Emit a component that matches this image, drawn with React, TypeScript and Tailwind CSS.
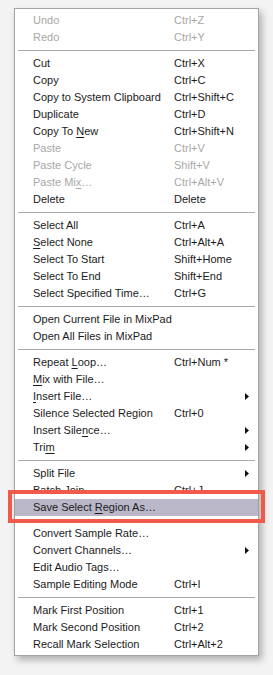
import React from "react";

type Item = {
  label: React.ReactNode;
  shortcut?: string;
  disabled?: boolean;
  submenu?: boolean;
  highlighted?: boolean;
};

// underline the mnemonic letter
const U = ({ children }: { children: React.ReactNode }) => (
  <span className="underline underline-offset-[2px]">{children}</span>
);

const groups: Item[][] = [
  [
    { label: "Undo", shortcut: "Ctrl+Z", disabled: true },
    { label: "Redo", shortcut: "Ctrl+Y", disabled: true },
  ],
  [
    { label: "Cut", shortcut: "Ctrl+X" },
    { label: "Copy", shortcut: "Ctrl+C" },
    { label: "Copy to System Clipboard", shortcut: "Ctrl+Shift+C" },
    { label: "Duplicate", shortcut: "Ctrl+D" },
    { label: <>Copy To <U>N</U>ew</>, shortcut: "Ctrl+Shift+N" },
    { label: "Paste", shortcut: "Ctrl+V", disabled: true },
    { label: "Paste Cycle", shortcut: "Shift+V", disabled: true },
    { label: <>Paste Mi<U>x</U>…</>, shortcut: "Ctrl+Alt+V", disabled: true },
    { label: "Delete", shortcut: "Delete" },
  ],
  [
    { label: "Select All", shortcut: "Ctrl+A" },
    { label: <><U>S</U>elect None</>, shortcut: "Ctrl+Alt+A" },
    { label: "Select To Start", shortcut: "Shift+Home" },
    { label: "Select To End", shortcut: "Shift+End" },
    { label: "Select Specified Time…", shortcut: "Ctrl+G" },
  ],
  [
    { label: "Open Current File in MixPad" },
    { label: "Open All Files in MixPad" },
  ],
  [
    { label: <>Repeat <U>L</U>oop…</>, shortcut: "Ctrl+Num *" },
    { label: <><U>M</U>ix with File…</> },
    { label: <><U>I</U>nsert File…</>, submenu: true },
    { label: "Silence Selected Region", shortcut: "Ctrl+0" },
    { label: <>Insert Sile<U>n</U>ce…</>, submenu: true },
    { label: <>Tri<U>m</U></>, submenu: true },
  ],
  [
    { label: "Split File", submenu: true },
    { label: "Batch Join", shortcut: "Ctrl+J" },
    { label: <>Save Select <U>R</U>egion As…</>, highlighted: true },
    { label: "Convert Sample Rate…" },
    { label: "Convert Channels…", submenu: true },
    { label: "Edit Audio Tags…" },
    { label: "Sample Editing Mode", shortcut: "Ctrl+I" },
  ],
  [
    { label: "Mark First Position", shortcut: "Ctrl+1" },
    { label: "Mark Second Position", shortcut: "Ctrl+2" },
    { label: "Recall Mark Selection", shortcut: "Ctrl+Alt+2" },
  ],
];

const Arrow = () => (
  <svg width="4" height="7" viewBox="0 0 4 7" className="absolute right-[9px] top-[5px]">
    <path d="M0 0 L4 3.5 L0 7 Z" fill="#111" />
  </svg>
);

const Row = ({ item }: { item: Item }) => {
  const color = item.disabled ? "text-[#a7a7a7]" : "text-[#1b1b1b]";
  const row = (
    <div
      className={`relative flex h-[17px] items-center pl-[18px] leading-[17px] ${color} ${
        item.highlighted ? "bg-[#bab7c9]" : ""
      }`}
    >
      <span className="w-[141px] shrink-0 whitespace-nowrap">{item.label}</span>
      {item.shortcut && <span className="whitespace-nowrap">{item.shortcut}</span>}
      {item.submenu && <Arrow />}
    </div>
  );
  if (!item.highlighted) return row;
  return (
    <div className="relative pb-[9px]">
      {row}
      {/* annotation frame drawn over the menu */}
      <div className="pointer-events-none absolute -left-[7px] -right-[7px] -top-[9px] bottom-[2px] border-[4px] border-[#f15a4b]" />
    </div>
  );
};

export default function App() {
  return (
    <div className="min-h-[675px] w-[273px] bg-[#f3f3f3] pl-[14px] pt-[8px] font-['Liberation_Sans',Arial,sans-serif] text-[11px]">
      <div className="w-[245px] border border-[#a3a3a3] bg-white pb-[2px] pt-[3px] shadow-[3px_4px_7px_rgba(0,0,0,0.28)]">
        {groups.map((g, gi) => (
          <div key={gi}>
            {gi > 0 && (
              <div className="flex h-[9px] items-center px-[3px]">
                <div className="h-px w-full bg-[#a9a9a9]" />
              </div>
            )}
            {g.map((item, i) => (
              <Row key={i} item={item} />
            ))}
          </div>
        ))}
      </div>
    </div>
  );
}
